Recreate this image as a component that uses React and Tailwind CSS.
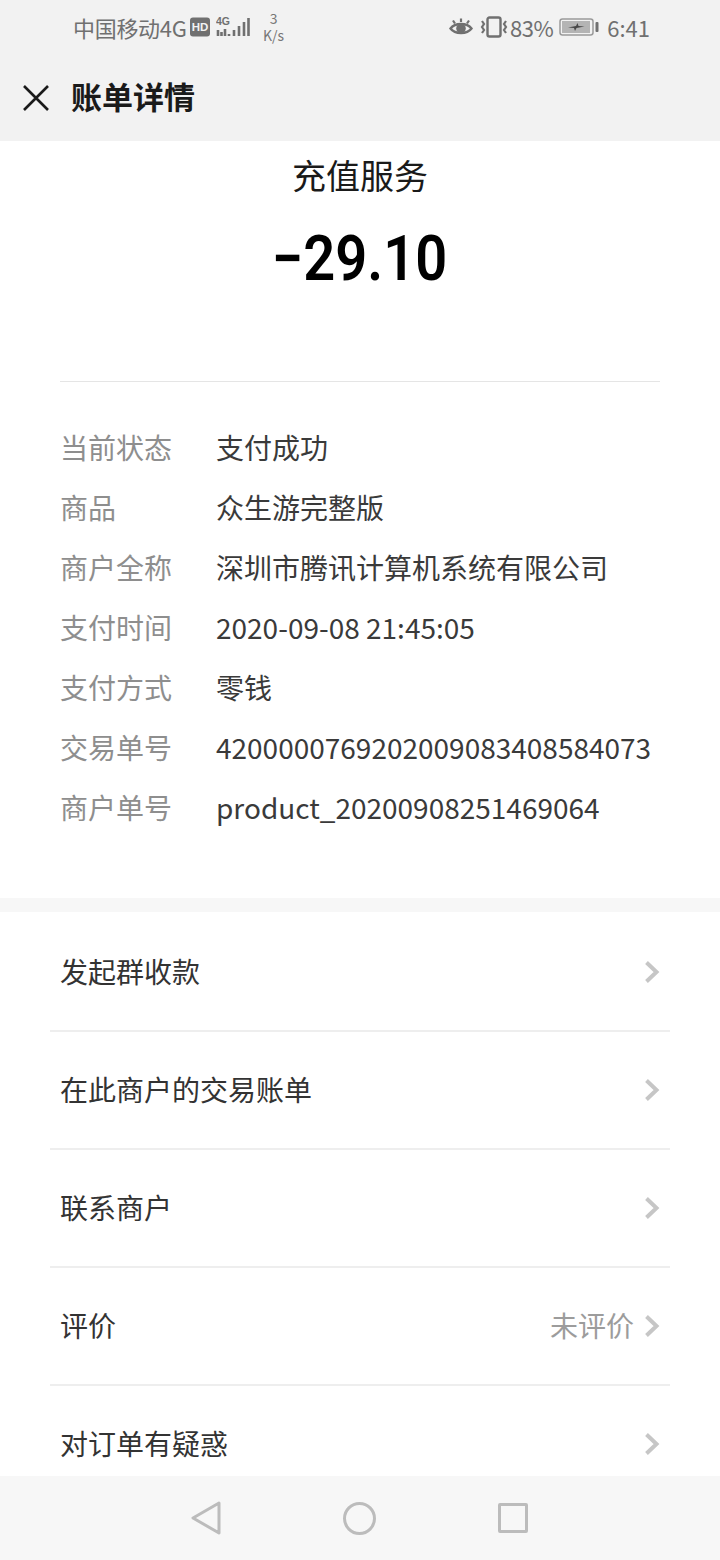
import React from 'react';

const FONT = "font-['Noto_Sans_CJK_SC','Noto_Sans',sans-serif]";

const DETAILS = [
    ['当前状态', '支付成功'],
    ['商品', '众生游完整版'],
    ['商户全称', '深圳市腾讯计算机系统有限公司'],
    ['支付时间', '2020-09-08 21:45:05'],
    ['支付方式', '零钱'],
    ['交易单号', '4200000769202009083408584073'],
    ['商户单号', 'product_20200908251469064'],
];

const MENU = [
    { label: '发起群收款' },
    { label: '在此商户的交易账单' },
    { label: '联系商户' },
    { label: '评价', value: '未评价' },
    { label: '对订单有疑惑', last: true },
];

function Chevron() {
    return (
        <svg width="16" height="24" viewBox="0 0 16 24" fill="none" className="shrink-0">
            <path d="M2.500 3.500 L12.500 13 L2.500 22.500" stroke="#c6c6c6" strokeWidth="4" />
        </svg>
    );
}

function StatusBar() {
    return (
        <div className="relative h-[56px] shrink-0 text-[#707070]">
            <div className="flex h-full items-center pb-[3px] pl-[73px] pr-[70px]">
                <span className="text-[22px] leading-none tracking-[-0.3px]">中国移动4G</span>
                <svg width="20" height="20" viewBox="0 0 20 20" className="ml-[3px]">
                    <rect x="0" y="0.500" width="20" height="19" rx="3" fill="#707070" />
                    <text x="10" y="14" textAnchor="middle" fontSize="11.500" fontWeight="700" fill="#f2f2f2" fontFamily="Liberation Sans">HD</text>
                </svg>
                <svg width="34" height="22" viewBox="0 0 34 22" className="ml-[6px]">
                    <text x="0" y="9" fontSize="10.500" fontWeight="700" fill="#707070" fontFamily="Liberation Sans">4G</text>
                    <path d="M2 14v6M5.500 16v4M9 13v7M13 18v2M18 14v6M23 10v10M28 6v14M32.500 2v18" stroke="#707070" strokeWidth="2.600" />
                </svg>
                <div className="ml-[12px] flex w-[24px] flex-col items-center text-[14px] leading-[17px] text-[#777777]">
                    <span>3</span>
                    <span>K/s</span>
                </div>
                <div className="ml-auto flex items-center">
                    <svg width="24" height="22" viewBox="0 0 24 22" className="mr-[1px]">
                        <path d="M1.500 12.500 C6 6.500 18 6.500 22.500 12.500 C18 18.500 6 18.500 1.500 12.500Z" fill="none" stroke="#707070" strokeWidth="2.400" />
                        <circle cx="12" cy="12.500" r="4.800" fill="#707070" />
                        <path d="M4 4.500l2 3M12 2.500v3.500M20 4.500l-2 3" stroke="#707070" strokeWidth="2.200" />
                    </svg>
                    <svg width="30" height="24" viewBox="0 0 30 24" className="ml-[5px] mr-[1px]">
                        <rect x="8.500" y="2.500" width="13" height="19" rx="2" fill="none" stroke="#707070" strokeWidth="2.400" />
                        <path d="M3 6l2 3-2 3 2 3-2 3M27 6l-2 3 2 3-2 3 2 3" fill="none" stroke="#707070" strokeWidth="2.200" />
                    </svg>
                    <span className="text-[22px] leading-none tracking-[-0.5px]">83%</span>
                    <svg width="40" height="20" viewBox="0 0 40 20" className="ml-[6px]">
                        <rect x="1" y="2" width="33" height="16" rx="2.500" fill="#f2f2f2" stroke="#9a9a9a" strokeWidth="1.500" />
                        <rect x="3" y="4" width="28" height="12" fill="#b4b4b4" />
                        <path d="M9 10.500l8-1.500 1.500-3 1 3 6 .5-8 1.500-1.500 3-1-3z" fill="#484848" />
                        <rect x="36.500" y="5" width="3" height="10" rx="1" fill="#707070" />
                    </svg>
                    <span className="ml-[8px] text-[22px] leading-none">6:41</span>
                </div>
            </div>
        </div>
    );
}

function NavBar() {
    return (
        <div className="flex h-[85px] shrink-0 items-center pb-[1px]">
            <svg width="26" height="26" viewBox="0 0 26 26" className="ml-[23px]">
                <path d="M1 1 L25 25 M25 1 L1 25" stroke="#1a1a1a" strokeWidth="2.600" />
            </svg>
            <h1 className="mb-[5px] ml-[22px] text-[31px] font-bold leading-none text-[#1a1a1a]">账单详情</h1>
        </div>
    );
}

function DetailRow({ label, value }) {
    return (
        <div className="flex h-[60px] items-center text-[28px] leading-none">
            <span className="w-[156px] shrink-0 text-[#8e8e8e]">{label}</span>
            <span className="whitespace-nowrap text-[#3a3a3a]">{value}</span>
        </div>
    );
}

function MenuRow({ label, value, last }) {
    return (
        <div className={`flex h-[118px] items-center pl-[10px] pr-[10px] ${last ? 'pb-[4px]' : 'border-b-2 border-[#eeeeee] pb-[2px]'}`}>
            <span className="text-[28px] leading-none text-[#333333]">{label}</span>
            <div className="ml-auto flex items-center gap-[10px]">
                {value && <span className="text-[28px] leading-none text-[#9c9c9c]">{value}</span>}
                <Chevron />
            </div>
        </div>
    );
}

export default function App() {
    return (
        <div className={`flex h-[1560px] w-[720px] flex-col overflow-hidden bg-white ${FONT}`}>
            <div className="flex flex-col bg-[#f2f2f2]">
                <StatusBar />
                <NavBar />
            </div>

            <div className="min-h-0 flex-1 overflow-hidden">
                <div className="flex flex-col items-center">
                    <div className="mt-[11px] text-[34px] leading-[46px] text-[#1a1a1a]">充值服务</div>
                    <div className="mt-[21px] scale-x-[0.89] font-['Roboto',sans-serif] text-[63px] font-semibold leading-[80px] text-black">−29.10</div>
                </div>

                <div className="mx-[60px] mt-[82px] border-t border-[#e5e5e5] pt-[35px]">
                    {DETAILS.map(([label, value]) => (
                        <DetailRow key={label} label={label} value={value} />
                    ))}
                </div>

                <div className="mt-[61px] h-[14px] bg-[#f7f7f7]" />

                <div className="mx-[50px] mt-[2px]">
                    {MENU.map((item) => (
                        <MenuRow key={item.label} {...item} />
                    ))}
                </div>
            </div>

            <div className="flex h-[84px] shrink-0 items-center justify-center bg-[#f7f7f7]">
                <div className="flex items-center gap-[122px] pr-[1px]">
                    <svg width="30" height="34" viewBox="0 0 30 34">
                        <path d="M28 2 L2 17 L28 32 Z" fill="none" stroke="#bcbcbc" strokeWidth="3" strokeLinejoin="round" />
                    </svg>
                    <div className="h-[33px] w-[33px] rounded-full border-[3px] border-[#bcbcbc]" />
                    <div className="h-[30px] w-[30px] rounded-[2px] border-[3px] border-[#bcbcbc]" />
                </div>
            </div>
        </div>
    );
}
